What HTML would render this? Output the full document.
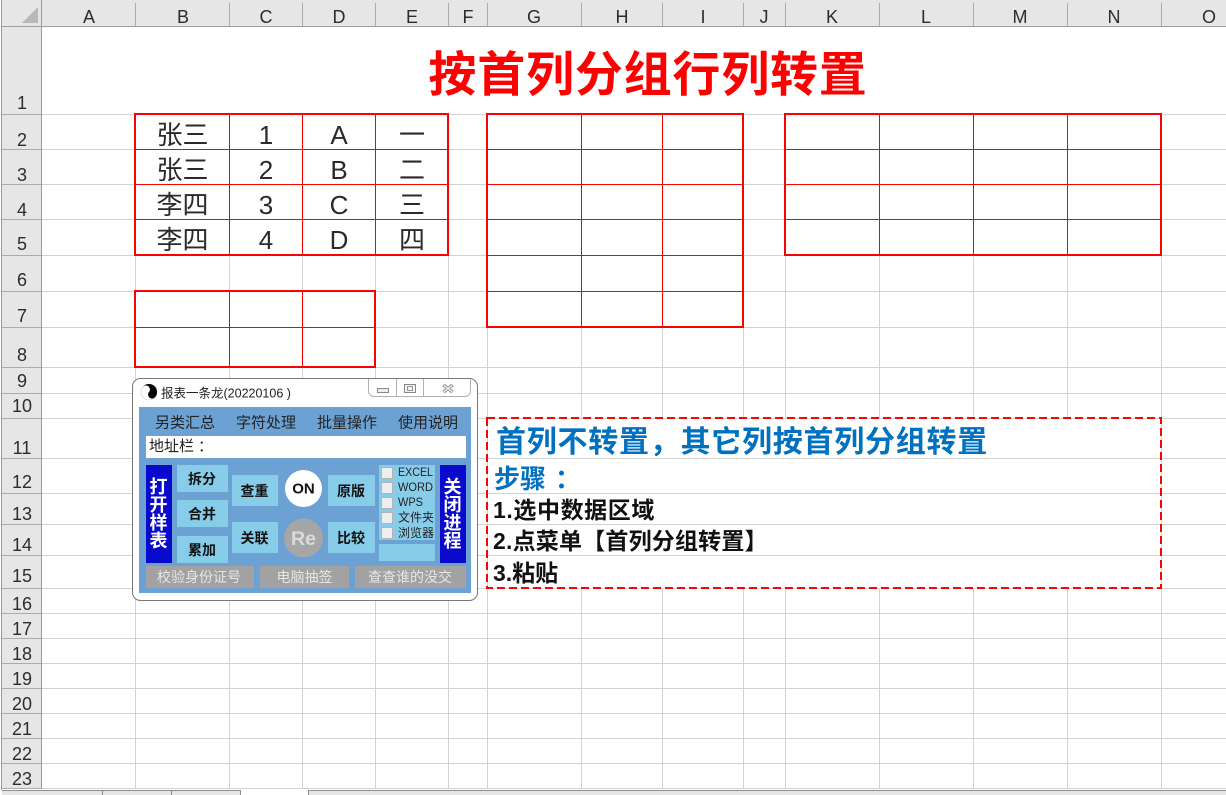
<!DOCTYPE html>
<html lang="zh"><head><meta charset="utf-8"><title>按首列分组行列转置</title>
<style>
html,body{margin:0;padding:0;width:1226px;height:795px;overflow:hidden;background:#fff}
svg{display:block}
text{font-family:"Liberation Sans","Noto Sans CJK SC",sans-serif}
.hd text{font-size:18px;fill:#2c2c2c;text-anchor:middle}
.t text{font-size:26px;fill:#2a2a2a;text-anchor:middle}
.m text{font-size:15px;fill:#222}
.b text{font-size:14px;font-weight:bold;fill:#111;text-anchor:middle}
.v text{font-size:18px;font-weight:bold;fill:#fff;text-anchor:middle}
.c text{font-size:12px;fill:#222}
.g text{font-size:14px;fill:#e6e6e6;text-anchor:middle}
</style></head><body>
<svg width="1226" height="795" viewBox="0 0 1226 795" xmlns="http://www.w3.org/2000/svg">
<rect width="1226" height="795" fill="#fff"/>
<!-- grid -->
<g fill="#d2d2d2" shape-rendering="crispEdges">
<rect x="135" y="114" width="1" height="675"/><rect x="229" y="114" width="1" height="675"/><rect x="302" y="114" width="1" height="675"/><rect x="375" y="114" width="1" height="675"/><rect x="448" y="114" width="1" height="675"/><rect x="487" y="114" width="1" height="675"/><rect x="581" y="114" width="1" height="675"/><rect x="662" y="114" width="1" height="675"/><rect x="743" y="114" width="1" height="675"/><rect x="785" y="114" width="1" height="675"/><rect x="879" y="114" width="1" height="675"/><rect x="973" y="114" width="1" height="675"/><rect x="1067" y="114" width="1" height="675"/><rect x="1161" y="114" width="1" height="675"/>
</g>
<rect x="488" y="419" width="673" height="169" fill="#fff"/>
<g fill="#d2d2d2" shape-rendering="crispEdges">
<rect x="42" y="114" width="1184" height="1"/><rect x="42" y="149" width="1184" height="1"/><rect x="42" y="184" width="1184" height="1"/><rect x="42" y="219" width="1184" height="1"/><rect x="42" y="255" width="1184" height="1"/><rect x="42" y="291" width="1184" height="1"/><rect x="42" y="327" width="1184" height="1"/><rect x="42" y="367" width="1184" height="1"/><rect x="42" y="393" width="1184" height="1"/><rect x="42" y="418" width="1184" height="1"/><rect x="42" y="458" width="1184" height="1"/><rect x="42" y="493" width="1184" height="1"/><rect x="42" y="524" width="1184" height="1"/><rect x="42" y="555" width="1184" height="1"/><rect x="42" y="588" width="1184" height="1"/><rect x="42" y="613" width="1184" height="1"/><rect x="42" y="638" width="1184" height="1"/><rect x="42" y="663" width="1184" height="1"/><rect x="42" y="688" width="1184" height="1"/><rect x="42" y="713" width="1184" height="1"/><rect x="42" y="738" width="1184" height="1"/><rect x="42" y="763" width="1184" height="1"/><rect x="42" y="788" width="1184" height="1"/>
</g>
<!-- headers -->
<rect x="2" y="0" width="1224" height="26" fill="#e6e6e6"/>
<rect x="2" y="0" width="39" height="789" fill="#e6e6e6"/>
<g shape-rendering="crispEdges">
<rect x="1" y="0" width="1" height="790" fill="#9a9a9a"/>
<rect x="41" y="0" width="1" height="789" fill="#999"/>
<rect x="2" y="26" width="1224" height="1" fill="#9e9e9e"/>
<g fill="#ababab">
<rect x="135" y="3" width="1" height="23"/><rect x="229" y="3" width="1" height="23"/><rect x="302" y="3" width="1" height="23"/><rect x="375" y="3" width="1" height="23"/><rect x="448" y="3" width="1" height="23"/><rect x="487" y="3" width="1" height="23"/><rect x="581" y="3" width="1" height="23"/><rect x="662" y="3" width="1" height="23"/><rect x="743" y="3" width="1" height="23"/><rect x="785" y="3" width="1" height="23"/><rect x="879" y="3" width="1" height="23"/><rect x="973" y="3" width="1" height="23"/><rect x="1067" y="3" width="1" height="23"/><rect x="1161" y="3" width="1" height="23"/>
<rect x="2" y="114" width="39" height="1"/><rect x="2" y="149" width="39" height="1"/><rect x="2" y="184" width="39" height="1"/><rect x="2" y="219" width="39" height="1"/><rect x="2" y="255" width="39" height="1"/><rect x="2" y="291" width="39" height="1"/><rect x="2" y="327" width="39" height="1"/><rect x="2" y="367" width="39" height="1"/><rect x="2" y="393" width="39" height="1"/><rect x="2" y="418" width="39" height="1"/><rect x="2" y="458" width="39" height="1"/><rect x="2" y="493" width="39" height="1"/><rect x="2" y="524" width="39" height="1"/><rect x="2" y="555" width="39" height="1"/><rect x="2" y="588" width="39" height="1"/><rect x="2" y="613" width="39" height="1"/><rect x="2" y="638" width="39" height="1"/><rect x="2" y="663" width="39" height="1"/><rect x="2" y="688" width="39" height="1"/><rect x="2" y="713" width="39" height="1"/><rect x="2" y="738" width="39" height="1"/><rect x="2" y="763" width="39" height="1"/><rect x="2" y="788" width="39" height="1"/>
</g>
</g>
<polygon points="38,7 38,23 22,23" fill="#b8b8b8"/>
<g class="hd">
<text x="89" y="23">A</text><text x="183" y="23">B</text><text x="266" y="23">C</text><text x="339" y="23">D</text><text x="412" y="23">E</text><text x="468" y="23">F</text><text x="534" y="23">G</text><text x="622" y="23">H</text><text x="703" y="23">I</text><text x="764" y="23">J</text><text x="832" y="23">K</text><text x="926" y="23">L</text><text x="1020" y="23">M</text><text x="1114" y="23">N</text><text x="1209" y="23">O</text>
<text x="22" y="109">1</text><text x="22" y="146">2</text><text x="22" y="181">3</text><text x="22" y="216">4</text><text x="22" y="250">5</text><text x="22" y="286">6</text><text x="22" y="322">7</text><text x="22" y="361">8</text><text x="22" y="387">9</text><text x="22" y="412">10</text><text x="22" y="454">11</text><text x="22" y="488">12</text><text x="22" y="520">13</text><text x="22" y="551">14</text><text x="22" y="582">15</text><text x="22" y="610">16</text><text x="22" y="635">17</text><text x="22" y="660">18</text><text x="22" y="685">19</text><text x="22" y="710">20</text><text x="22" y="735">21</text><text x="22" y="760">22</text><text x="22" y="785">23</text>
</g>
<!-- red tables -->
<g shape-rendering="crispEdges">
<g fill="#f00">
<rect x="135" y="149" width="313" height="1"/><rect x="135" y="184" width="313" height="1"/><rect x="135" y="219" width="313" height="1"/><rect x="229" y="114" width="1" height="141"/><rect x="302" y="114" width="1" height="141"/><rect x="375" y="114" width="1" height="141"/>
<rect x="487" y="149" width="256" height="1"/><rect x="487" y="184" width="256" height="1"/><rect x="487" y="219" width="256" height="1"/><rect x="487" y="255" width="256" height="1"/><rect x="487" y="291" width="256" height="1"/><rect x="581" y="114" width="1" height="213"/><rect x="662" y="114" width="1" height="213"/>
<rect x="785" y="149" width="376" height="1"/><rect x="785" y="184" width="376" height="1"/><rect x="785" y="219" width="376" height="1"/><rect x="879" y="114" width="1" height="141"/><rect x="973" y="114" width="1" height="141"/><rect x="1067" y="114" width="1" height="141"/>
<rect x="135" y="327" width="240" height="1"/><rect x="229" y="291" width="1" height="76"/><rect x="302" y="291" width="1" height="76"/>
</g>
<g fill="none" stroke="#f00" stroke-width="2">
<rect x="135" y="114" width="313" height="141"/>
<rect x="487" y="114" width="256" height="213"/>
<rect x="785" y="114" width="376" height="141"/>
<rect x="135" y="291" width="240" height="76"/>
</g>
<rect x="487" y="418" width="674" height="170" fill="none" stroke="#f00" stroke-width="2" stroke-dasharray="8 4"/>
</g>
<text x="648" y="91" font-size="48" font-weight="bold" letter-spacing=".8" fill="#f00" text-anchor="middle">按首列分组行列转置</text>
<g class="t">
<text x="182.500" y="144">张三</text><text x="266" y="144">1</text><text x="339" y="144">A</text><text x="412" y="144">一</text>
<text x="182.500" y="179">张三</text><text x="266" y="179">2</text><text x="339" y="179">B</text><text x="412" y="179">二</text>
<text x="182.500" y="214">李四</text><text x="266" y="214">3</text><text x="339" y="214">C</text><text x="412" y="214">三</text>
<text x="182.500" y="249">李四</text><text x="266" y="249">4</text><text x="339" y="249">D</text><text x="412" y="249">四</text>
</g>
<!-- note -->
<text x="496" y="452" font-size="30" font-weight="bold" letter-spacing=".75" fill="#0070c0">首列不转置，其它列按首列分组转置</text>
<text x="494" y="488" font-size="26" font-weight="bold" fill="#0070c0">步骤</text>
<text x="555" y="488" font-size="26" font-weight="bold" fill="#0070c0">：</text>
<g font-size="23" font-weight="bold" fill="#111">
<text x="493" y="518" letter-spacing=".6">1.选中数据区域</text>
<text x="493" y="549" letter-spacing=".2">2.点菜单【首列分组转置】</text>
<text x="493" y="581">3.粘贴</text>
</g>
<!-- dialog -->
<rect x="132.5" y="378.5" width="345" height="222" rx="8" fill="#fff" stroke="#777"/>
<path d="M368.5 379V391a5.500 5.500 0 0 0 5.500 5.500H465a5.500 5.500 0 0 0 5.500-5.500V379M396.500 379V396.500M423.500 379V396.500" fill="none" stroke="#b0b0b0"/>
<rect x="377.500" y="388.500" width="11" height="4" fill="#eee" stroke="#888"/>
<rect x="404.500" y="384.500" width="11" height="8" fill="#f4f4f4" stroke="#888"/>
<rect x="407.500" y="386.500" width="5" height="4" fill="none" stroke="#999"/>
<path d="M443.500 385L452.500 392M452.500 385L443.500 392" stroke="#9a9a9a" stroke-width="3.500" fill="none"/>
<path d="M444 385.500L452 391.500M452 385.500L444 391.500" stroke="#f2f2f2" stroke-width="1.300" fill="none"/>
<g transform="translate(149 392) rotate(-50)">
<circle r="8" fill="#fff" stroke="#ccc" stroke-width=".6"/>
<path d="M0-8A8 8 0 0 1 0 8A4 4 0 0 1 0 0A4 4 0 0 0 0-8Z" fill="#000"/>
<circle cy="-4" r="1.400" fill="#fff"/><circle cy="4" r="1.400" fill="#000"/>
</g>
<text x="161" y="397.500" font-size="12.500" fill="#222">报表一条龙(20220106 )</text>
<rect x="139" y="407" width="332" height="186" fill="#6ca2d3"/>
<g class="m">
<text x="155" y="427.500">另类汇总</text><text x="236" y="427.500">字符处理</text><text x="317" y="427.500">批量操作</text><text x="398" y="427.500">使用说明</text>
</g>
<rect x="146" y="436" width="320" height="22" fill="#fff"/>
<g class="m"><text x="149" y="451">地址栏</text><text x="198" y="451">：</text></g>
<g shape-rendering="crispEdges">
<rect x="146" y="465" width="26" height="98" fill="#0a0acc"/>
<rect x="440" y="465" width="26" height="98" fill="#0a0acc"/>
<g fill="#87cdea">
<rect x="177" y="465" width="51" height="27"/><rect x="177" y="500" width="51" height="27"/><rect x="177" y="536" width="51" height="27"/>
<rect x="232" y="475" width="46" height="31"/><rect x="232" y="522" width="46" height="31"/>
<rect x="328" y="475" width="47" height="31"/><rect x="328" y="522" width="47" height="31"/>
<rect x="379" y="465" width="56" height="75"/><rect x="379" y="544" width="56" height="17"/>
</g>
<g fill="#a2a2a2"><rect x="146" y="566" width="108" height="22"/><rect x="260" y="566" width="89" height="22"/><rect x="355" y="566" width="111" height="22"/></g>
</g>
<g class="b">
<text x="202" y="484">拆分</text><text x="202" y="519">合并</text><text x="202" y="555">累加</text>
<text x="254.500" y="496">查重</text><text x="254.500" y="543">关联</text>
<text x="351" y="496">原版</text><text x="351" y="543">比较</text>
</g>
<g class="v">
<text x="158.500" y="493">打</text><text x="158.500" y="511">开</text><text x="158.500" y="529">样</text><text x="158.500" y="547">表</text>
<text x="452.500" y="493">关</text><text x="452.500" y="511">闭</text><text x="452.500" y="529">进</text><text x="452.500" y="547">程</text>
</g>
<circle cx="303.500" cy="488.500" r="18.500" fill="#fff"/>
<text x="303.500" y="493.500" font-size="15" font-weight="bold" fill="#111" text-anchor="middle">ON</text>
<circle cx="303.500" cy="538" r="19.500" fill="#a6a6a6"/>
<text x="303.500" y="545" font-size="19.500" font-weight="bold" fill="#dadada" text-anchor="middle">Re</text>
<g fill="#eeeeee" stroke="#b4b4b4" shape-rendering="crispEdges">
<rect x="381.500" y="467.500" width="11" height="11"/><rect x="381.500" y="482.500" width="11" height="11"/><rect x="381.500" y="497.500" width="11" height="11"/><rect x="381.500" y="512.500" width="11" height="11"/><rect x="381.500" y="527.500" width="11" height="11"/>
</g>
<g class="c">
<text x="398" y="476" textLength="35" lengthAdjust="spacingAndGlyphs">EXCEL</text>
<text x="398" y="491" textLength="35" lengthAdjust="spacingAndGlyphs">WORD</text>
<text x="398" y="506" textLength="25" lengthAdjust="spacingAndGlyphs">WPS</text>
<text x="398" y="521.500">文件夹</text><text x="398" y="537">浏览器</text>
</g>
<g class="g">
<text x="199" y="582">校验身份证号</text><text x="304.500" y="582">电脑抽签</text><text x="410" y="582">查查谁的没交</text>
</g>
<!-- sheet tabs -->
<g shape-rendering="crispEdges">
<rect x="2" y="790" width="238" height="5" fill="#e6e6e6"/>
<rect x="2" y="790" width="239" height="1" fill="#8f8f8f"/>
<rect x="240" y="790" width="1" height="5" fill="#8f8f8f"/>
<rect x="102" y="791" width="1" height="4" fill="#888"/>
<rect x="171" y="791" width="1" height="4" fill="#888"/>
<rect x="309" y="790" width="917" height="5" fill="#e6e6e6"/>
<rect x="308" y="790" width="918" height="1" fill="#8f8f8f"/>
<rect x="308" y="790" width="1" height="5" fill="#8f8f8f"/>
</g>
</svg>
</body></html>
